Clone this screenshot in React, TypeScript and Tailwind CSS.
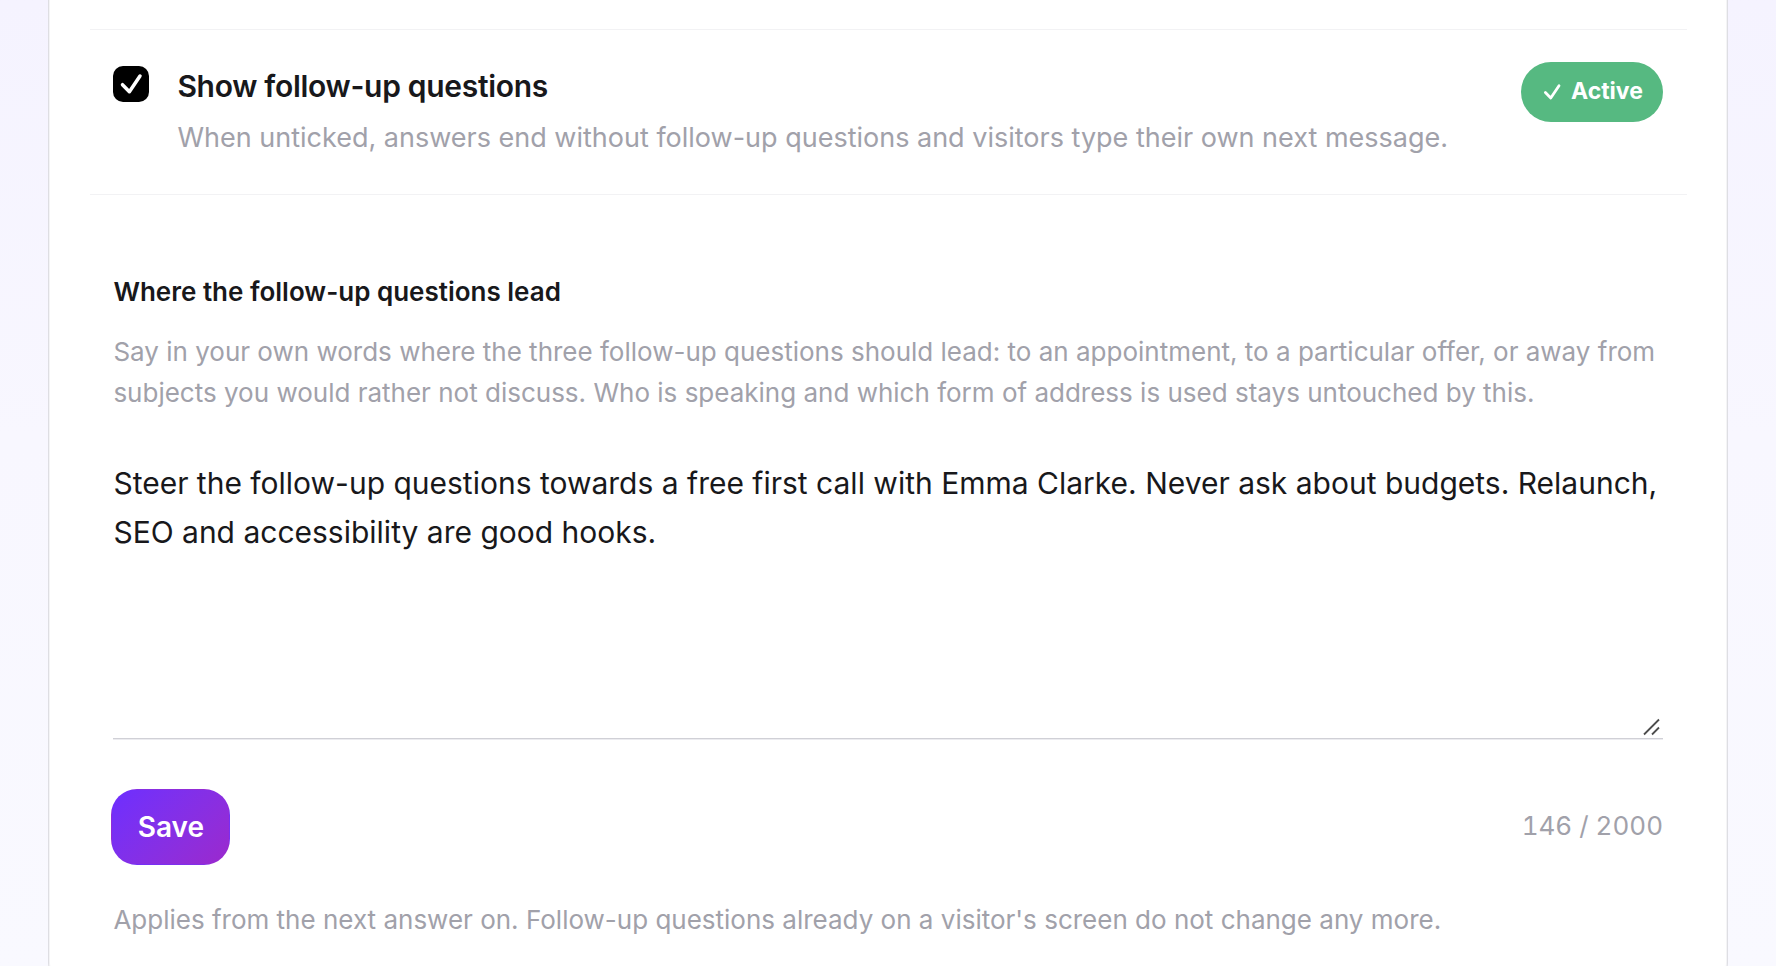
import { useState } from "react";

function CheckMark({ className, strokeWidth }: { className: string; strokeWidth: number }) {
  return (
    <svg viewBox="0 0 36 36" fill="none" stroke="currentColor" strokeWidth={strokeWidth} strokeLinecap="round" strokeLinejoin="round" className={className}>
      <path d="M9.5 18.7 16.4 25.7 27 10" />
    </svg>
  );
}

export default function App() {
  const [active, setActive] = useState(true);
  const [text, setText] = useState(
    "Steer the follow-up questions towards a free first call with Emma Clarke. Never ask about budgets. Relaunch, SEO and accessibility are good hooks."
  );

  return (
    <div className="h-[966px] overflow-hidden bg-linear-to-b from-[#f5f3ff] via-[#f8f7ff] via-45% to-[#f9f9ff] px-12 font-['Inter',sans-serif] text-[#18181b]">
      <div className="h-[986px] rounded-b-3xl border-x border-b border-[#dedee3] bg-white pt-[29px] pr-10 pl-[41px] shadow-[inset_1px_0_0_#f4f4f6,inset_-1px_0_0_#f4f4f6]">
        {/* Toggle row */}
        <div className="flex h-[166px] items-start border-y border-[#f2f2f4] pt-8 pr-6 pl-[23.4px]">
          <button
            type="button"
            role="checkbox"
            aria-checked={active}
            onClick={() => setActive(!active)}
            className="mt-1 size-9 shrink-0 rounded-[10px] bg-black text-white"
          >
            {active && <CheckMark className="size-9" strokeWidth={3.5} />}
          </button>
          <div className="ml-7 flex-1">
            <h2 className="mt-1 text-[30px] leading-10 font-semibold tracking-[-0.01em]">Show follow-up questions</h2>
            <p className="mt-3 text-[27px] leading-10 whitespace-nowrap text-[#a1a1aa]">
              When unticked, answers end without follow-up questions and visitors type their own next message.
            </p>
          </div>
          <span className="flex h-[60px] w-[142px] shrink-0 items-center rounded-full bg-[#56b981] pl-[17px] text-white">
            <CheckMark className="size-7" strokeWidth={3.6} />
            <span className="mb-0.5 ml-[5px] text-[23px] font-bold">Active</span>
          </span>
        </div>

        {/* Guidance form */}
        <div className="pt-[77px] pr-6 pl-[23.4px]">
          <h3 className="text-[26px] leading-10 font-semibold">Where the follow-up questions lead</h3>
          <p className="mt-[19px] text-[26px] leading-[41px] text-[#a1a1aa]">
            Say in your own words where the three follow-up questions should lead: to an appointment, to a particular offer, or away from subjects you would rather not discuss. Who is speaking and which form of address is used stays untouched by this.
          </p>
          <div className="relative mt-[46px]">
            <textarea
              value={text}
              onChange={(e) => setText(e.target.value)}
              maxLength={2000}
              className="block h-[280px] w-full resize-none overflow-hidden border-b border-[#d0d0d6] text-[30px] leading-[49px] shadow-[0_1px_0_#ececf0] outline-none"
            />
            <svg viewBox="0 0 18 18" className="pointer-events-none absolute right-[3px] bottom-[3px] size-[18px]" stroke="#4d4d4d" strokeWidth="1.8">
              <path d="M2 16.5 17 1.5M10 16.5 17 9.5" />
            </svg>
          </div>
          <div className="mt-[50px] flex items-center justify-between">
            <button
              type="button"
              className="-ml-0.5 h-[76px] w-[119px] rounded-[26px] border border-transparent bg-linear-135 from-[#6d2eff] to-[#9b28cd] text-[28px] font-semibold text-white"
            >
              Save
            </button>
            <span className="mb-1 text-[26px] text-[#a1a1aa] tabular-nums">{text.length} / 2000</span>
          </div>
          <p className="mt-[35px] text-[26px] leading-10 text-[#a1a1aa]">
            Applies from the next answer on. Follow-up questions already on a visitor's screen do not change any more.
          </p>
        </div>
      </div>
    </div>
  );
}
